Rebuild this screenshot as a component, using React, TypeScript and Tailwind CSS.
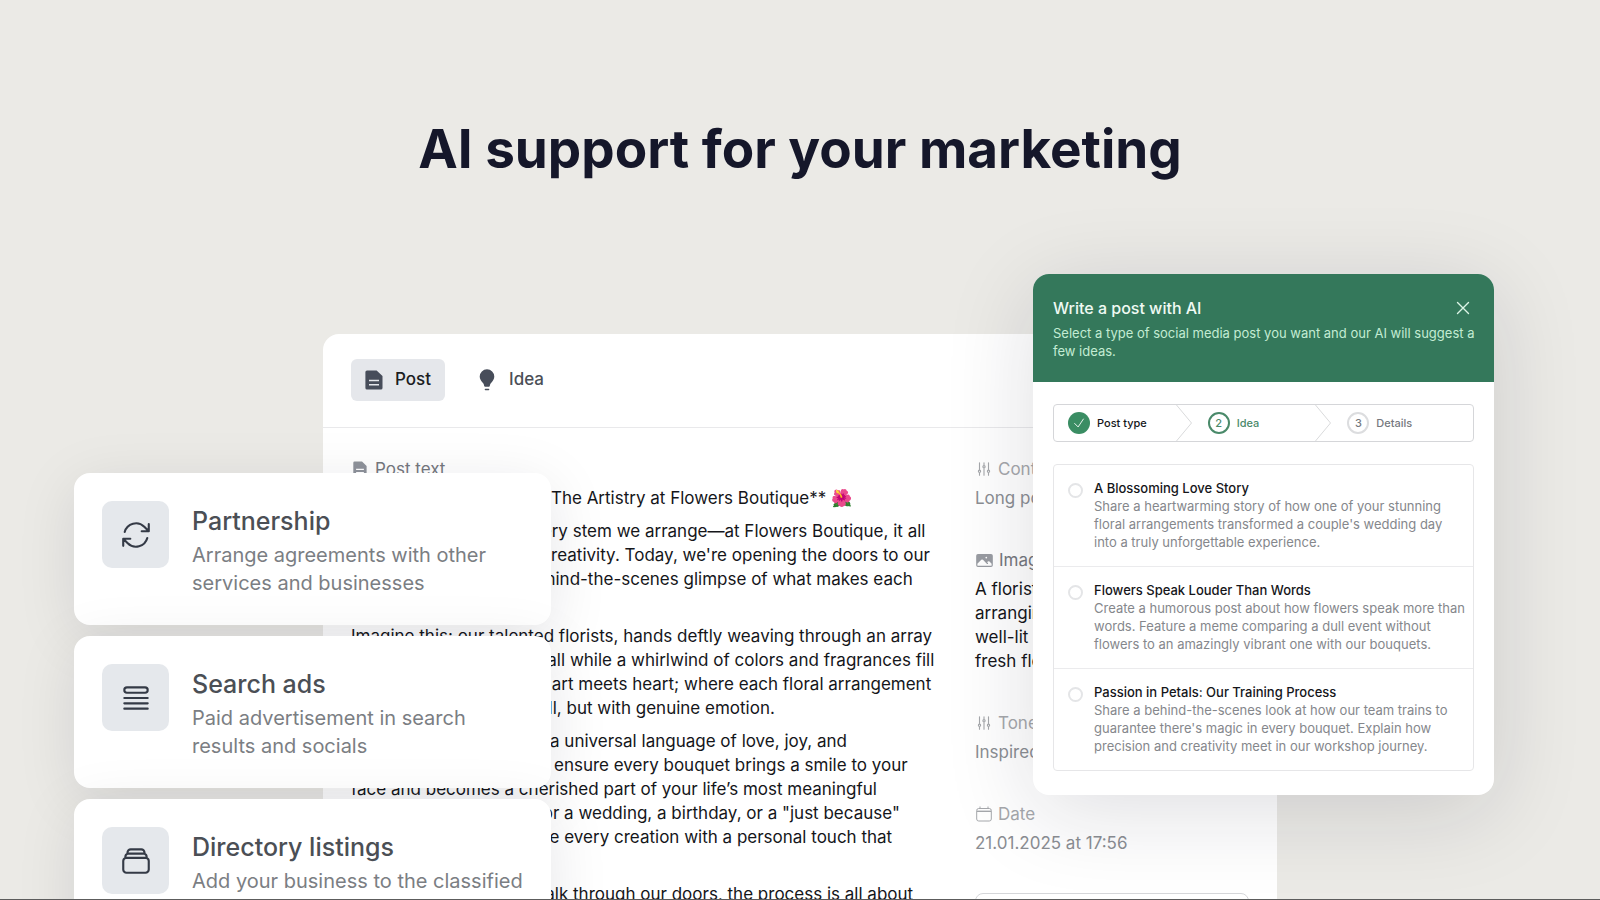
import type { ReactNode } from "react";
import {
  HiOutlineAdjustmentsVertical,
  HiOutlineArrowPath,
  HiOutlineCheck,
  HiOutlineQueueList,
  HiOutlineRectangleStack,
  HiOutlineXMark,
  HiPhoto,
} from "react-icons/hi2";

const channels = [
  {
    title: "Partnership",
    lines: ["Arrange agreements with other", "services and businesses"],
    icon: HiOutlineArrowPath,
  },
  {
    title: "Search ads",
    lines: ["Paid advertisement in search", "results and socials"],
    icon: HiOutlineQueueList,
  },
  {
    title: "Directory listings",
    lines: ["Add your business to the classified"],
    icon: HiOutlineRectangleStack,
  },
];

const paragraphs = [
  ["**Behind Each Blossom: The Artistry at Flowers Boutique** 🌺"],
  [
    "There's heart behind every stem we arrange—at Flowers Boutique, it all",
    "starts with passion and creativity. Today, we're opening the doors to our",
    "workshop for a quick behind-the-scenes glimpse of what makes each",
    "bouquet special.",
  ],
  [
    "Imagine this: our talented florists, hands deftly weaving through an array",
    "of the brightest blooms, all while a whirlwind of colors and fragrances fill",
    "the studio. This is where art meets heart; where each floral arrangement",
    "is made not only with skill, but with genuine emotion.",
  ],
  [
    "To us, flowers represent a universal language of love, joy, and",
    "gratitude. That's why we ensure every bouquet brings a smile to your",
    "face and becomes a cherished part of your life’s most meaningful",
    "moments. Whether it's for a wedding, a birthday, or a \"just because\"",
    "gesture, we always infuse every creation with a personal touch that",
    "speaks to you.",
  ],
  ["From the moment you walk through our doors, the process is all about"],
];

const ideas = [
  {
    id: "love-story",
    title: "A Blossoming Love Story",
    lines: [
      "Share a heartwarming story of how one of your stunning",
      "floral arrangements transformed a couple's wedding day",
      "into a truly unforgettable experience.",
    ],
  },
  {
    id: "louder-than-words",
    title: "Flowers Speak Louder Than Words",
    lines: [
      "Create a humorous post about how flowers speak more than",
      "words. Feature a meme comparing a dull event without",
      "flowers to an amazingly vibrant one with our bouquets.",
    ],
  },
  {
    id: "passion-in-petals",
    title: "Passion in Petals: Our Training Process",
    lines: [
      "Share a behind-the-scenes look at how our team trains to",
      "guarantee there's magic in every bouquet. Explain how",
      "precision and creativity meet in our workshop journey.",
    ],
  },
];

function DocumentIcon({ className }: { className?: string }) {
  return (
    <svg viewBox="0 0 18 20" className={className} fill="currentColor" aria-hidden="true">
      <path
        fillRule="evenodd"
        d="M2 .5h9.600L17.500 6v12a1.600 1.600 0 0 1-1.600 1.600H2A1.600 1.600 0 0 1 .4 18V2.100A1.600 1.600 0 0 1 2 .5ZM4 9.800v1.500h10V9.800H4Zm0 4.200v1.500h10V14H4Z"
      />
    </svg>
  );
}

function BulbIcon({ className }: { className?: string }) {
  return (
    <svg viewBox="0 0 16 22" className={className} fill="currentColor" aria-hidden="true">
      <path d="M8 .3A7.300 7.300 0 0 0 .7 7.600c0 2.600 1.400 4.300 2.800 5.800 1 1.100 1.500 2 1.700 3.600.1.500.4.800.9.800h3.800c.5 0 .8-.3.900-.8.2-1.600.7-2.500 1.700-3.600 1.400-1.500 2.800-3.200 2.800-5.800A7.300 7.300 0 0 0 8 .3Z" />
      <rect x="5.700" y="19.800" width="4.600" height="1.400" rx=".7" />
    </svg>
  );
}

function CalendarIcon({ className }: { className?: string }) {
  return (
    <svg viewBox="0 0 16 16" className={className} fill="none" stroke="currentColor" aria-hidden="true">
      <rect x=".7" y="2.500" width="14.600" height="12.500" rx="2" />
      <path d="M1 5.300h14" strokeWidth="1.400" />
      <path d="M4 .5v2M12 .5v2" />
    </svg>
  );
}

function ChannelCards() {
  return (
    <ul className="absolute top-[139px] -left-[249px] flex w-[477px] flex-col gap-[11px]">
      {channels.map(({ title, lines, icon: Icon }) => (
        <li
          key={title}
          className="flex h-[152px] gap-[23px] rounded-2xl bg-white p-7 shadow-[0_12px_60px_rgba(20,20,40,0.10)]"
        >
          <div className="flex size-[67px] shrink-0 items-center justify-center rounded-[10px] bg-[#e5e8ec]">
            <Icon size={34} className="text-[#343a46]" />
          </div>
          <div className="pt-1 whitespace-nowrap">
            <h3 className="text-[25px] leading-8 font-medium text-[#4b4f55]">{title}</h3>
            <p className="mt-1 text-xl leading-7 text-[#7b7e83]">
              {lines.map((line) => (
                <span key={line} className="block">{line}</span>
              ))}
            </p>
          </div>
        </li>
      ))}
    </ul>
  );
}

type FieldProps = { icon: ReactNode; label: string; strong?: boolean; children: ReactNode };

function Field({ icon, label, strong, children }: FieldProps) {
  return (
    <div>
      <dt
        className={
          strong
            ? "flex items-center gap-[5px] text-[#75787e]"
            : "flex items-center gap-[5px] text-[#a6a8ac]"
        }
      >
        {icon}
        {label}
      </dt>
      <dd className={strong ? "mt-[5px] text-[#15161a]" : "mt-[5px] text-[#8b8e93]"}>
        {children}
      </dd>
    </div>
  );
}

function Editor() {
  return (
    <div className="min-h-[700px] rounded-t-2xl bg-white">
      <div className="flex gap-[18px] border-b border-[#e9e9eb] px-7 pt-[25px] pb-[26px] text-[17px] font-medium">
        <button
          type="button"
          className="flex h-[42px] items-center gap-3 rounded-md bg-[#e5e7eb] px-[14px] text-[#1b1d22]"
        >
          <DocumentIcon className="h-5 w-[18px] text-[#474d5a]" />
          Post
        </button>
        <button type="button" className="flex h-[42px] items-center gap-[14px] px-4 text-[#4b4f57]">
          <BulbIcon className="h-[22px] w-4 text-[#474d5a]" />
          Idea
        </button>
      </div>

      <div className="grid grid-cols-[1fr_274px] gap-7 px-7 pt-[29px] text-[17px] leading-6">
        <div className="min-w-0 whitespace-nowrap">
          <h2 className="flex items-center gap-2 pl-0.5 text-[#75787e]">
            <DocumentIcon className="h-4 w-[14px] text-[#8f939b]" />
            Post text
          </h2>
          <div className="mt-[5px] flex flex-col gap-[9px] text-[#15161a]">
            {paragraphs.map((lines) => (
              <p key={lines[0]}>
                {lines.map((line) => (
                  <span key={line} className="block">{line}</span>
                ))}
              </p>
            ))}
          </div>
        </div>

        <dl className="flex flex-col gap-[38px] whitespace-nowrap">
          <Field icon={<HiOutlineAdjustmentsVertical size={18} />} label="Content length">
            Long post
          </Field>
          <Field strong icon={<HiPhoto size={19} className="text-[#999ca2]" />} label="Image prompt">
            A florist in an apron
            <br />
            arranging bouquets in a
            <br />
            well-lit workshop among
            <br />
            fresh flowers
          </Field>
          <Field icon={<HiOutlineAdjustmentsVertical size={18} />} label="Tone">
            Inspired
          </Field>
          <Field icon={<CalendarIcon className="mx-px size-4" />} label="Date">
            21.01.2025 at 17:56
          </Field>
          <button
            type="button"
            aria-label="Change date"
            className="h-12 rounded-lg border border-[#d5d6d9] bg-white"
          />
        </dl>
      </div>
    </div>
  );
}

function StepArrow() {
  return (
    <svg viewBox="0 0 16 36" className="mr-0.5 ml-auto h-9 w-4" fill="none" stroke="#d9dadc" aria-hidden="true">
      <path d="M.5 0 15.500 18 .5 36" />
    </svg>
  );
}

function Steps() {
  return (
    <ol className="grid h-[38px] grid-cols-3 rounded border border-[#d5d6d9] text-[11px] font-medium">
      <li className="flex items-center pl-[14px]">
        <span className="mr-[7px] flex size-[22px] items-center justify-center rounded-full bg-[#3a8d63] text-white">
          <HiOutlineCheck size={14} />
        </span>
        <span className="text-[#15161a]">Post type</span>
        <StepArrow />
      </li>
      <li className="flex items-center pl-[14px] text-[#4a8a6a]">
        <span className="mr-[7px] flex size-[22px] items-center justify-center rounded-full border-2 border-[#4a8a6a]">
          2
        </span>
        Idea
        <StepArrow />
      </li>
      <li className="flex items-center pl-[14px] text-[#75787e]">
        <span className="mr-[7px] flex size-[22px] items-center justify-center rounded-full border-2 border-[#dcdddf]">
          3
        </span>
        Details
      </li>
    </ol>
  );
}

function IdeaDialog() {
  return (
    <div
      role="dialog"
      aria-labelledby="dialog-title"
      className="absolute -top-[60px] -right-[217px] w-[461px] overflow-hidden rounded-2xl bg-white whitespace-nowrap shadow-[0_16px_90px_rgba(20,20,40,0.14)]"
    >
      <div className="h-[108px] bg-[#34785b] px-5 pt-[22px]">
        <div className="flex items-center justify-between">
          <h2 id="dialog-title" className="text-base leading-6 font-medium text-[#effaf3]">
            Write a post with AI
          </h2>
          <button type="button" aria-label="Close" className="text-[#dcf5e6]">
            <HiOutlineXMark size={22} />
          </button>
        </div>
        <p className="mt-1 text-[13px] leading-[18px] text-[#c3ecd3]">
          Select a type of social media post you want and our AI will suggest a
          <br />
          few ideas.
        </p>
      </div>

      <div className="px-5 pt-[22px] pb-6">
        <Steps />
        <div className="mt-[22px] divide-y divide-[#ebebed] rounded border border-[#e6e6e8] text-[13px] leading-[18px]">
          {ideas.map(({ id, title, lines }) => (
            <label key={id} htmlFor={id} className="flex gap-[11px] px-[14px] pt-[14px] pb-[15px]">
              <input
                id={id}
                type="radio"
                name="idea"
                className="mt-1 size-[15px] shrink-0 appearance-none rounded-full border-2 border-[#e4e5e7]"
              />
              <span>
                <span className="block font-medium text-[#15161a]">{title}</span>
                {lines.map((line) => (
                  <span key={line} className="block text-[#85878c]">{line}</span>
                ))}
              </span>
            </label>
          ))}
        </div>
      </div>
    </div>
  );
}

export default function App() {
  return (
    <section className="h-screen overflow-hidden border-b border-[#5c5c5c] bg-[#ebeae6] pt-[117px] font-['Inter',sans-serif]">
      <h1 className="text-center text-[53px] leading-[64px] font-bold text-[#15172a]">
        AI support for your marketing
      </h1>
      <div className="relative mx-auto mt-[153px] w-full max-w-[954px]">
        <Editor />
        <ChannelCards />
        <IdeaDialog />
      </div>
    </section>
  );
}
